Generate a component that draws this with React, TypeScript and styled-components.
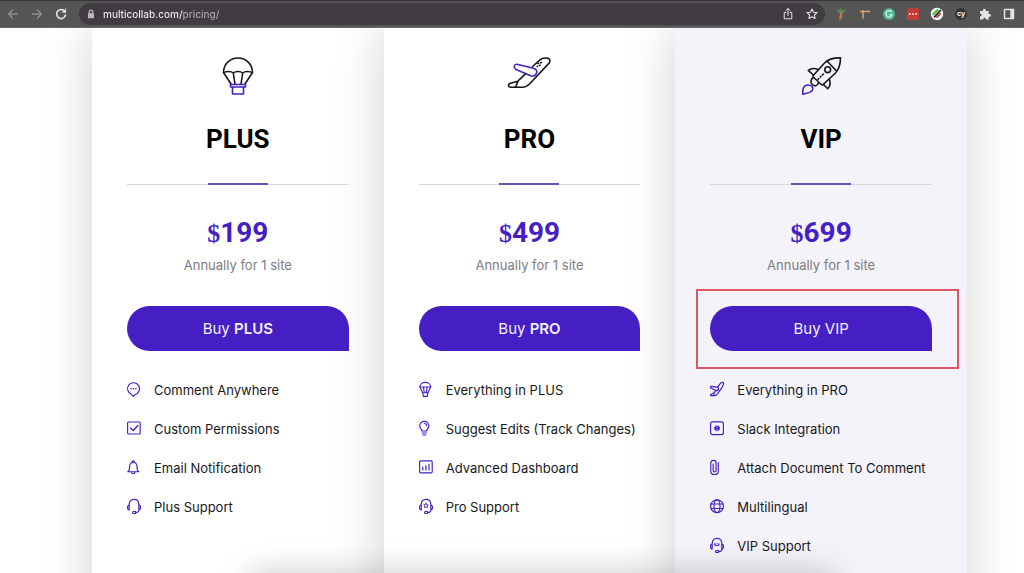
import React from 'react';
import styled, { createGlobalStyle, css } from 'styled-components';

const GlobalStyle = createGlobalStyle`
  *, *::before, *::after { box-sizing: border-box; }
  body { margin: 0; background: #fff; font-family: Inter, "Liberation Sans", sans-serif; }
`;

const violet = '#451fc4';
const ink = '#17171c';

const Page = styled.div`
  min-height: 100vh;
  display: flex;
  flex-direction: column;
  overflow: hidden;
`;

const Toolbar = styled.header`
  position: relative;
  z-index: 2;
  display: flex;
  align-items: center;
  height: 28px;
  padding: 0 3px 0 1px;
  background: #565556;
  border-top: 1px solid #3a373b;
  border-bottom: 1px solid #6a696a;
`;

const IconButton = styled.button<{ $dim?: boolean }>`
  display: grid;
  place-items: center;
  flex: none;
  width: 24px;
  height: 22px;
  padding: 0;
  border: 0;
  background: none;
  color: ${(p) => (p.$dim ? '#8f8e8f' : '#e4e3e4')};
`;

const AddressBar = styled.form`
  display: flex;
  align-items: center;
  flex: 1;
  height: 22px;
  margin: 0 4px 0 6px;
  padding: 0 1px 0 5px;
  border-radius: 11px;
  background: #403c41;
  color: #b9b7ba;
`;

const AddressInput = styled.input`
  flex: 1;
  min-width: 0;
  height: 18px;
  margin-left: 5px;
  padding: 0;
  border: 0;
  outline: 0;
  font: 500 10px/18px Inter, sans-serif;
  color: transparent;
  background: linear-gradient(90deg, #f2f1f2 80px, #aaa8ab 80px);
  background-clip: text;
  -webkit-background-clip: text;
`;

/* The cards run on past the bottom edge of the window. */
const Plans = styled.main`
  flex: 1;
  display: grid;
  grid-template-columns: repeat(3, minmax(0, 1fr));
  margin-bottom: -60px;
  padding: 0 57px 0 92px;
`;

const Card = styled.section<{ $tinted?: boolean }>`
  display: flex;
  flex-direction: column;
  align-items: center;
  padding: 29px 35px 64px;
  background: ${(p) => (p.$tinted ? '#f4f3fa' : '#fff')};
  box-shadow: 0 0 48px rgba(0, 0, 0, 0.18);
`;

const PlanName = styled.h2`
  margin: 26px 0 0;
  font: 700 26px/36px Roboto, sans-serif;
  color: #000;
`;

const Divider = styled.hr`
  width: 100%;
  height: 2px;
  margin: 26px 0 0;
  border: 0;
  background:
    linear-gradient(#6a50b4, #6a50b4) center / 60px 2px no-repeat,
    linear-gradient(#d9d8dc, #d9d8dc) bottom / 100% 1px no-repeat;
`;

const Price = styled.p`
  margin: 30px 0 0;
  font: 700 28px/36px Roboto, sans-serif;
  color: ${violet};
`;

const Currency = styled.span`
  font-family: "Liberation Serif", serif;
  font-size: 26px;
`;

const Term = styled.p`
  margin: 3px 0 0;
  font-size: 13px;
  line-height: 20px;
  color: #7d7c80;
`;

const BuyArea = styled.div`
  position: relative;
  width: 100%;
  margin-top: 31px;
`;

const BuyButton = styled.button`
  display: block;
  width: 100%;
  height: 45px;
  padding: 0;
  border: 0;
  border-radius: 23px 23px 0 23px;
  background: ${violet};
  color: #f3effc;
  font: 400 15px/45px Inter, sans-serif;
  strong { font-weight: 600; }
`;

const Highlight = styled.span`
  position: absolute;
  inset: -17px -27px -18px -14px;
  border: 2px solid #dc5560;
  pointer-events: none;
`;

const Features = styled.ul`
  width: 100%;
  margin: 19px 0 0;
  padding: 0;
  list-style: none;
`;

const Feature = styled.li`
  display: flex;
  align-items: center;
  gap: 12px;
  height: 39px;
  font-size: 13px;
  white-space: nowrap;
  color: ${ink};
  svg { flex: none; }
`;

const BottomShade = styled.div`
  position: fixed;
  top: 100%;
  left: 250px;
  right: 190px;
  height: 60px;
  box-shadow: 0 0 32px rgba(0, 0, 0, 0.22);
`;

const line = css`
  fill: none;
  stroke-linecap: round;
  stroke-linejoin: round;
`;

const Hero = styled.svg`
  ${line}
  width: 46px;
  height: 38px;
  stroke: ${ink};
  stroke-width: 1.600;
  overflow: visible;
  .accent { stroke: ${violet}; }
`;

const Small = styled.svg`
  ${line}
  width: 15px;
  height: 15px;
  overflow: visible;
  stroke: ${violet};
  stroke-width: 1.150;
`;

const Balloon = () => (
  <Hero viewBox="0 0 46 38">
    <path d="M8.500 15.500C8.500 7 15 1 23 1s14.500 6 14.500 14.500M8.500 15.500L16 27M37.500 15.500L30 27M8.500 16c2-2 8-2 9.800 0 2.200-2 7.200-2 9.400 0 1.800-2 7.800-2 9.800 0M18.300 16l1.700 11M27.700 16L26 27" />
    <path className="accent" d="M15.500 27.500h15v2.500h-15zM17.500 30v7h11v-7" />
  </Hero>
);

const Plane = () => (
  <Hero viewBox="0 0 46 38">
    <path d="M26.500 9.500L34 2.800c2-1.700 5.500-2 8.300-1.400 1.800.5 2 2.500 1 4.500L23.500 27c-2 2-4 3.200-7 3.200H4.500c-2.500 0-2.700-2.800-.7-3.600l8-2.400 8-7.500M12 24.500L9.500 30" />
    <path d="M31.300 9.300h.1M33.500 8.500l.6-.2M32 6.500l.6-.2M34.700 5.700l.8-.2" strokeWidth="1.700" />
    <path className="accent" d="M11 7.200l16.500 4c3 .8 4 3 2.800 5.500-1 2.200-3 3-5.600 2.100L10 12.600c-3-2-2-5.600 1-5.400z" />
  </Hero>
);

const Rocket = () => (
  <Hero viewBox="0 0 46 38">
    <path d="M15.300 18.500L26.500 6C30 2.500 36 .7 42.500.9 42.500 7 41 12 37.500 16L25 27.700q-1 .6-1.800-.2L15.300 20q-.7-.7 0-1.500z" />
    <path d="M29 4l9.500 10" />
    <circle cx="29.700" cy="12.700" r="2.900" />
    <path d="M20 12.500C16.500 11 13 11.300 10.300 13.300L15.300 18M31.500 22.500c1.200 3.500.7 6.800-1.800 9.200L25.500 27.500" />
    <path d="M15.500 20.500c-3 1.500-3.200 5-1.200 7s5 1.800 6.200-1.500" />
    <path d="M25.500 17l-1 1M23 19.300l-.6.600M20.700 21.600l-.7.700" />
    <path className="accent" d="M4.700 37.200C4.200 31.500 6 28 10 28c3.500 0 5.500 2.500 4.500 5-1.200 2.800-4.500 3.200-9.800 4.200z" />
  </Hero>
);

const icons: Record<string, React.ReactNode> = {
  comment: (
    <>
      <path d="M4.300 12.300A6 6 0 1 1 8.200 12.500L6.200 14.300z" />
      <path d="M4 6.700h.1M6.400 6.700h.1M8.800 6.700h.1" strokeWidth="1.500" />
    </>
  ),
  check: (
    <>
      <rect x=".6" y="1" width="12.600" height="12" rx="1" />
      <path d="M3.500 7l2.800 2.500L10.800 4.500" strokeWidth="1.300" />
    </>
  ),
  bell: <path d="M.8 11.700c1.600-1 1.800-2.700 1.800-5C2.600 4 4.100 2.500 6.300 2.500S10 4 10 6.700c0 2.300.2 4 1.800 5zM5.100 2.300c0-2 2.400-2 2.400 0M4.600 12c.2 2.300 3.200 2.300 3.400 0" />,
  support: (
    <path d="M2.200 6V5.300C2.200 2.300 4.200.3 7 .3s4.800 2 4.800 5V6M2.200 6C0 6 0 11 2.200 11zM11.800 6c2.200 0 2.200 5 0 5zM12 11c0 1.700-1.300 2.500-3.500 2.500M6.500 12.500h2v2h-2c-1.300 0-1.300-2 0-2z" />
  ),
  star: (
    <path d="M7 4.300l.7 1.300 1.600.3-1.100 1.100.2 1.600L7 7.900l-1.400.7.200-1.600L4.700 5.900l1.600-.3z" strokeWidth=".9" />
  ),
  balloon: (
    <path d="M.8 5C1 2.300 3.500.3 6.300.3s5.300 2 5.500 4.700M.8 5h11M.8 5l2.700 5.300M11.800 5l-2.700 5.300M4.500 5.200L5.200 10M8.100 5.200L7.400 10M3.300 10.700h6M3.900 11.200l.4 3.100h4l.4-3.100" />
  ),
  bulb: (
    <path d="M3 10C3 8.300.7 7.300.7 4.800.7 2.200 2.700.3 5.300.3s4.600 1.900 4.600 4.500C9.900 7.300 7.600 8.300 7.600 10zM3.200 12h4.200M3.800 14h3M5.500 2.500c1.500 0 2.200.9 2.200 2.200" />
  ),
  chart: (
    <>
      <rect x=".6" y=".8" width="12.600" height="12" rx="1" />
      <path d="M3.800 7v3M6.900 5.500V10M10 4v6" strokeWidth="1.200" />
    </>
  ),
  plane: (
    <path d="M7.500 5.300l2.800-3.800C11.500.3 13.300.2 13.600 1c.2 2-1 3.700-2 5.200L8 11.200c-1 1.700-2 2.500-4 2.500H.9c-.8-.8 0-1.700 1-1.900l2.200-1 2-2.600M1 4.300l6 .9c1.600.3 2 2 1 3l-1.500.5L1.300 6.300C.4 5.800.2 4.600 1 4.300zM4 11v2.500" strokeWidth="1.250" />
  ),
  slack: (
    <>
      <rect x=".6" y=".8" width="12.800" height="12.800" rx="2" />
      <path d="M6.100 4.800v1.500H4.700M8 4.800v1.500h1.500M4.700 8.200h1.400v1.400M9.500 8.200H8v1.400M5 7.200h4" strokeWidth="1.300" />
    </>
  ),
  clip: <path d="M8.300 2.500v8.700c0 4.400-7.500 4.400-7.500 0V3c0-3.500 5.300-3.500 5.300 0v7.500c0 1.800-2.900 1.800-2.900 0V4" />,
  globe: (
    <>
      <circle cx="7" cy="7.200" r="6.400" />
      <ellipse cx="7" cy="7.200" rx="3" ry="6.400" />
      <path d="M1.200 5h11.600M1.200 9.500h11.600" />
    </>
  ),
  crown: <path d="M4.800 5.800l1.200.6L7 5.400l1 1 1.200-.6-.4 1.800H5.200z" strokeWidth=".9" />,
};

const Glyph = ({ names }: { names: string[] }) => (
  <Small viewBox="0 0 15 15" aria-hidden="true">
    {names.map((n) => (
      <React.Fragment key={n}>{icons[n]}</React.Fragment>
    ))}
  </Small>
);

type Plan = {
  name: string;
  price: string;
  icon: React.ReactNode;
  label: React.ReactNode;
  vip?: boolean;
  features: [string[], string][];
};

const plans: Plan[] = [
  {
    name: 'PLUS',
    price: '199',
    icon: <Balloon />,
    label: <>Buy <strong>PLUS</strong></>,
    features: [
      [['comment'], 'Comment Anywhere'],
      [['check'], 'Custom Permissions'],
      [['bell'], 'Email Notification'],
      [['support'], 'Plus Support'],
    ],
  },
  {
    name: 'PRO',
    price: '499',
    icon: <Plane />,
    label: <>Buy <strong>PRO</strong></>,
    features: [
      [['balloon'], 'Everything in PLUS'],
      [['bulb'], 'Suggest Edits (Track Changes)'],
      [['chart'], 'Advanced Dashboard'],
      [['support', 'star'], 'Pro Support'],
    ],
  },
  {
    name: 'VIP',
    price: '699',
    icon: <Rocket />,
    label: 'Buy VIP',
    vip: true,
    features: [
      [['plane'], 'Everything in PRO'],
      [['slack'], 'Slack Integration'],
      [['clip'], 'Attach Document To Comment'],
      [['globe'], 'Multilingual'],
      [['support', 'crown'], 'VIP Support'],
    ],
  },
];

const ToolIcon = styled.svg`
  ${line}
  width: 14px;
  height: 14px;
  stroke: currentColor;
  stroke-width: 1.300;
`;

const Extensions = styled.nav`
  display: flex;
`;

const ExtensionLabel = styled.span`
  display: grid;
  place-items: center;
  width: 12px;
  height: 12px;
  border-radius: 50%;
  background: #353438;
  color: #f0f0f0;
  font: 700 7px/12px Inter, sans-serif;
`;

const BrowserBar = () => (
  <Toolbar>
    <IconButton $dim aria-label="Back">
      <ToolIcon viewBox="0 0 14 14"><path d="M11.500 7h-9M6.500 3l-4 4 4 4" /></ToolIcon>
    </IconButton>
    <IconButton $dim aria-label="Forward">
      <ToolIcon viewBox="0 0 14 14"><path d="M2.500 7h9M7.500 3l4 4-4 4" /></ToolIcon>
    </IconButton>
    <IconButton aria-label="Reload">
      <ToolIcon viewBox="0 0 14 14">
        <path d="M11 4.800A4.500 4.500 0 1 0 11.500 8" strokeWidth="1.600" />
        <path d="M11.800 2v3.500H8.300z" fill="currentColor" strokeWidth=".5" />
      </ToolIcon>
    </IconButton>
    <AddressBar>
      <ToolIcon viewBox="0 0 14 14">
        <rect x="4" y="6.300" width="6" height="5" rx=".5" fill="currentColor" stroke="none" />
        <path d="M5.300 6.500V4.800c0-2.200 3.400-2.200 3.400 0v1.700" />
      </ToolIcon>
      <AddressInput aria-label="Address" defaultValue="multicollab.com/pricing/" />
      <IconButton type="button" aria-label="Share">
        <ToolIcon viewBox="0 0 14 14"><path d="M5 5.500H3.200v6.300h7.600V5.500H9M7 8.500V1.800M5 3.500l2-2 2 2" strokeWidth="1" /></ToolIcon>
      </IconButton>
      <IconButton type="button" aria-label="Bookmark">
        <ToolIcon viewBox="0 0 14 14"><path d="M7 2l1.500 3.200 3.500.4-2.600 2.400.7 3.500L7 9.800l-3.100 1.700.7-3.500L2 5.600l3.500-.4z" strokeWidth="1.100" /></ToolIcon>
      </IconButton>
    </AddressBar>
    <Extensions aria-label="Extensions">
      <IconButton aria-label="Carrot">
        <ToolIcon viewBox="0 0 14 14">
          <path d="M6.500 6L4 3M7 6V2M7.500 6L11 3" stroke="#5c9a55" />
          <path d="M7.300 6.500L6.300 11.500" stroke="#c9753c" strokeWidth="2.400" />
        </ToolIcon>
      </IconButton>
      <IconButton aria-label="Ruler">
        <ToolIcon viewBox="0 0 14 14"><path d="M2 4.500h10M5 3v8.500" stroke="#d9a26a" strokeWidth="1.600" strokeLinecap="butt" /></ToolIcon>
      </IconButton>
      <IconButton aria-label="Grammar">
        <ToolIcon viewBox="0 0 14 14">
          <circle cx="7" cy="7" r="6" fill="#4fb592" stroke="none" />
          <path d="M9.500 4.800a3.200 3.200 0 1 0 .6 3H7.700" stroke="#d6f2e8" />
        </ToolIcon>
      </IconButton>
      <IconButton aria-label="Passwords">
        <ToolIcon viewBox="0 0 14 14">
          <rect x="1" y="1.200" width="12" height="11.600" rx="1" fill="#c93a34" stroke="none" />
          <path d="M3.800 7h.1M7 7h.1M10.100 7h.1" stroke="#fbdedc" strokeWidth="1.900" />
        </ToolIcon>
      </IconButton>
      <IconButton aria-label="Colors">
        <ToolIcon viewBox="0 0 14 14">
          <circle cx="7" cy="7" r="6.200" fill="#fff" stroke="none" />
          <path d="M3.500 7L7.500 3.300" stroke="#5fc04c" strokeWidth="2.600" />
          <path d="M4.500 9.800L10.500 3.500" stroke="#27202a" strokeWidth="1.700" />
          <path d="M7 10L10.300 6.700" stroke="#d84040" strokeWidth="1.900" />
        </ToolIcon>
      </IconButton>
      <IconButton aria-label="Cypress">
        <ExtensionLabel>cy</ExtensionLabel>
      </IconButton>
      <IconButton aria-label="All extensions">
        <ToolIcon viewBox="0 0 14 14">
          <path d="M2 4h3c-1-3 3.500-3 2.700 0h3v3c3-.8 3 3.500 0 2.700v2.800H8c.3-2.500-3-2.500-2.700 0H2V9.500c2.300.2 2.300-3 0-2.700z" fill="currentColor" stroke="none" />
        </ToolIcon>
      </IconButton>
      <IconButton aria-label="Side panel">
        <ToolIcon viewBox="0 0 14 14">
          <rect x="2.500" y="2.500" width="9" height="9" strokeWidth="1.500" />
          <path d="M9.800 2.500v9" strokeWidth="3" strokeLinecap="butt" />
        </ToolIcon>
      </IconButton>
    </Extensions>
  </Toolbar>
);

export default function App() {
  return (
    <Page>
      <GlobalStyle />
      <BrowserBar />
      <Plans>
        {plans.map((plan) => (
          <Card key={plan.name} $tinted={plan.vip}>
            {plan.icon}
            <PlanName>{plan.name}</PlanName>
            <Divider />
            <Price><Currency>$</Currency>{plan.price}</Price>
            <Term>Annually for 1 site</Term>
            <BuyArea>
              <BuyButton type="button">{plan.label}</BuyButton>
              {plan.vip && <Highlight />}
            </BuyArea>
            <Features>
              {plan.features.map(([names, text]) => (
                <Feature key={text}>
                  <Glyph names={names} />
                  {text}
                </Feature>
              ))}
            </Features>
          </Card>
        ))}
      </Plans>
      <BottomShade />
    </Page>
  );
}
